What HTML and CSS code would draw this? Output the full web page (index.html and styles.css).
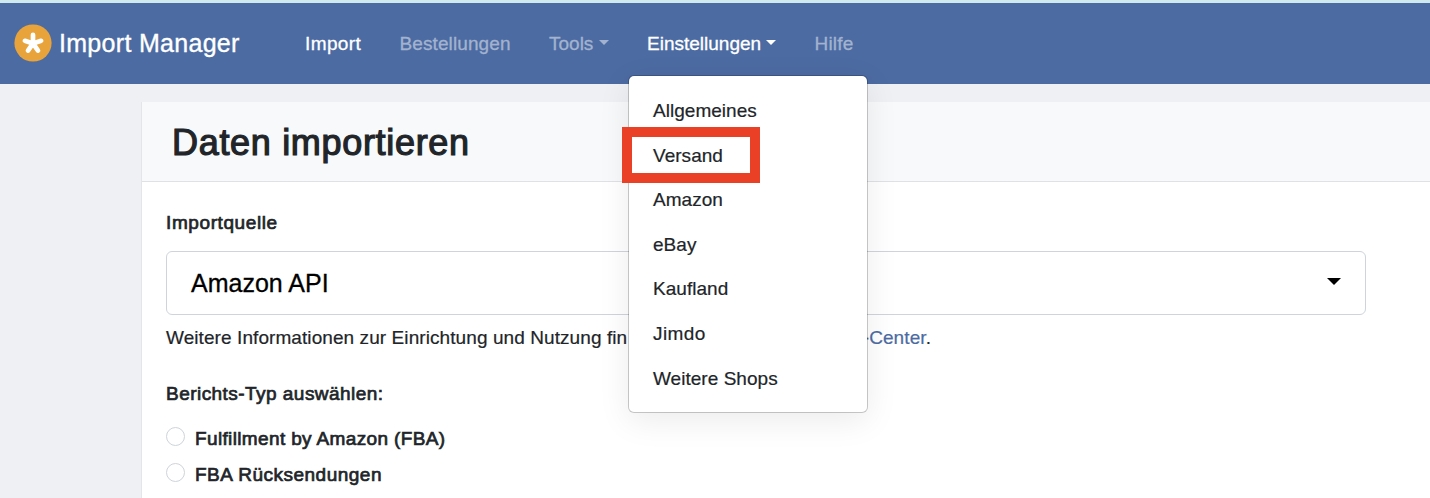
FILE: index.html
```html
<!DOCTYPE html>
<html lang="de">
<head>
<meta charset="utf-8">
<title>Import Manager</title>
<link rel="stylesheet" href="styles.css">
</head>
<body>
<header class="navbar">
  <a class="brand">
    <svg class="logo" viewBox="0 0 38 38"><circle cx="19" cy="19" r="18.6" fill="#e8a33b"/><path d="M19 19.4V10.8M19 19.4L10.9 16.8M19 19.4L27.1 16.8M19 19.4L14 26.6M19 19.4L24 26.6" stroke="#fff" stroke-width="4.7" stroke-linecap="round"/></svg>
    <span class="brand-name">Import Manager</span>
  </a>
  <nav class="nav">
    <a class="nav-link active import">Import</a>
    <a class="nav-link orders">Bestellungen</a>
    <a class="nav-link tools">Tools<i class="caret"></i></a>
    <div class="dropdown">
      <a class="nav-link active settings">Einstellungen<i class="caret"></i></a>
      <div class="menu">
        <a class="menu-item">Allgemeines</a>
        <a class="menu-item marked">Versand</a>
        <a class="menu-item">Amazon</a>
        <a class="menu-item">eBay</a>
        <a class="menu-item">Kaufland</a>
        <a class="menu-item jimdo">Jimdo</a>
        <a class="menu-item">Weitere Shops</a>
      </div>
    </div>
    <a class="nav-link help">Hilfe</a>
  </nav>
</header>
<main class="card">
  <div class="card-header"><h1 class="title">Daten importieren</h1></div>
  <div class="card-body">
    <div class="label source-label">Importquelle</div>
    <div class="select"><span class="select-value">Amazon API</span><svg class="select-arrow" viewBox="0 0 14 7"><path d="M0 0H14L7 7Z"/></svg></div>
    <p class="hint"><span class="hint-text">Weitere Informationen zur Einrichtung und Nutzung fin</span><span><a class="link">-Center</a>.</span></p>
    <div class="label type-label">Berichts-Typ auswählen:</div>
    <div class="radio"><i class="radio-dot"></i><span class="label fba">Fulfillment by Amazon (FBA)</span></div>
    <div class="radio"><i class="radio-dot"></i><span class="label returns">FBA Rücksendungen</span></div>
  </div>
</main>
</body>
</html>
```
FILE: styles.css
```css
*, *::after { box-sizing: border-box; }
body {
  margin: 0;
  height: 498px;
  overflow: hidden;
  background: #eef0f4;
  border-top: 3px solid #d0e9ef;
  color: #212529;
  font: 19px/28px "Liberation Sans", Arial, sans-serif;
}
.navbar {
  display: flex;
  align-items: center;
  height: 81px;
  padding-left: 14px;
  background: #4c6ba2;
}
.brand { display: flex; align-items: center; width: 291px; color: #fff; }
.logo { width: 38px; height: 38px; margin: -1px 7px 0 0; }
.brand-name { margin-top: -2px; font-size: 25px; letter-spacing: .3px; -webkit-text-stroke: .35px; }
.nav { display: grid; grid-template-columns: 94.5px 149.5px 98px 167.5px auto; }
.nav-link { display: flex; align-items: center; color: #a3b3cf; white-space: nowrap; -webkit-text-stroke: .3px; }
.nav-link.active { color: #fff; }
.import { letter-spacing: .4px; }
.orders { letter-spacing: .1px; }
.help { letter-spacing: .2px; }
.caret {
  margin: -2px 0 0 6px;
  border: 5px solid transparent;
  border-top-color: currentColor;
  border-bottom: 0;
}
.settings .caret { margin-left: 5px; }
.dropdown { position: relative; }
.menu {
  position: absolute;
  z-index: 2;
  top: 45px;
  left: -19px;
  width: 240px;
  height: 338px;
  padding: 13px 0 0 24px;
  background: #fff;
  background-clip: padding-box;
  border: 1px solid rgba(0, 0, 0, .2);
  border-radius: 6px;
  box-shadow: 0 8px 32px rgba(0, 0, 0, .08);
}
.menu-item { display: block; height: 44.7px; line-height: 44.7px; letter-spacing: .03px; position: relative; -webkit-text-stroke: .2px; }
.jimdo { letter-spacing: .4px; }
.marked { line-height: 46px; }
.marked::after {
  content: "";
  position: absolute;
  left: -31px;
  top: -6px;
  width: 138px;
  height: 56px;
  border: 10px solid #ea4025;
}
.card { height: 420px; margin: 18px 0 0 141px; background: #fff; border-left: 1px solid #e3e5e9; }
.card-header { height: 80px; padding: 21px 30px; background: #f8f9fb; border-bottom: 1px solid #dfe1e5; }
.title { margin: 0; font-size: 36px; line-height: 40px; font-weight: 400; letter-spacing: .68px; -webkit-text-stroke: 1.2px; }
.card-body { padding: 27px 24px; }
.label { -webkit-text-stroke: .7px; }
.source-label { letter-spacing: .6px; }
.type-label { margin-bottom: 13px; letter-spacing: .46px; }
.fba { letter-spacing: .36px; }
.returns { letter-spacing: .5px; }
.select {
  display: flex;
  align-items: center;
  justify-content: space-between;
  width: 1200px;
  height: 64px;
  margin-top: 14px;
  padding: 0 24px;
  border: 1px solid #ced4da;
  border-radius: 6px;
  color: #000;
  font-size: 25px;
}
.select-value { -webkit-text-stroke: .3px; }
.select-arrow { width: 14px; height: 7px; margin-top: -3px; }
.hint {
  display: flex;
  justify-content: space-between;
  width: 765px;
  margin: 9px 0 28px;
  white-space: nowrap;
  letter-spacing: .08px;
  -webkit-text-stroke: .2px;
}
.link { color: #4c6ba2; }
.radio { display: flex; align-items: center; height: 36px; }
.radio-dot { width: 19px; height: 19px; margin: -5px 10px 0 0; border: 1px solid #ced4da; border-radius: 50%; }
```
